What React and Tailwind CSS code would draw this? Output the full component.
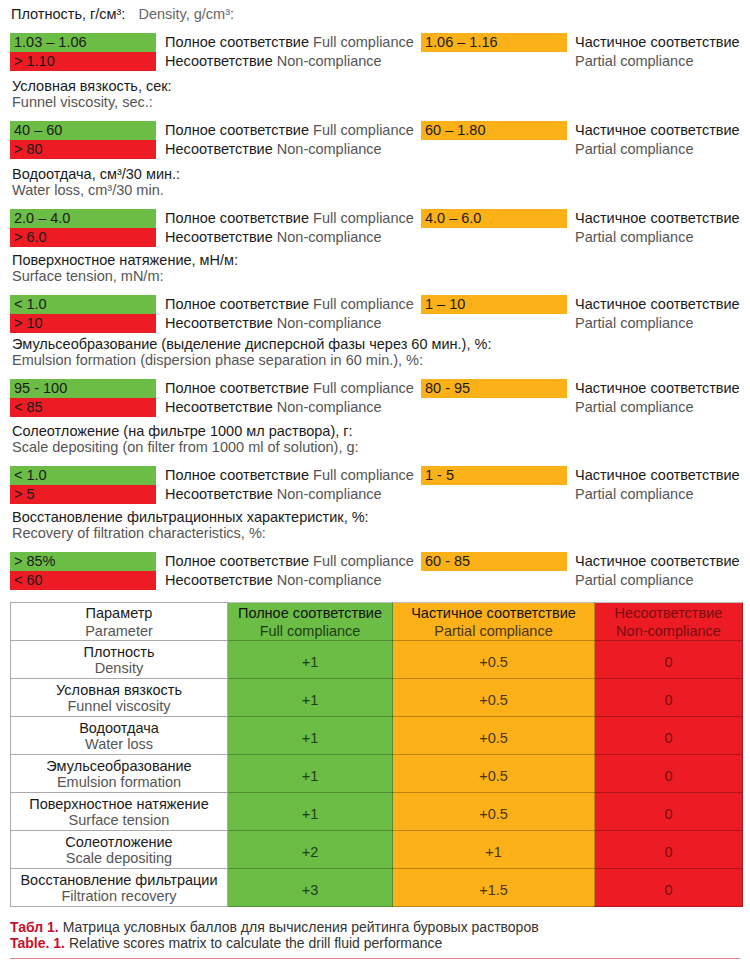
import React from 'react'

const sections = [
  { ru: 'Плотность, г/см³:', en: 'Density, g/cm³:', inline: true, pt: 6, full: '1.03 – 1.06', non: '> 1.10', partial: '1.06 – 1.16' },
  { ru: 'Условная вязкость, сек:', en: 'Funnel viscosity, sec.:', pt: 7, full: '40 – 60', non: '> 80', partial: '60 – 1.80' },
  { ru: 'Водоотдача, см³/30 мин.:', en: 'Water loss, cm³/30 min.', pt: 7, full: '2.0 – 4.0', non: '> 6.0', partial: '4.0 – 6.0' },
  { ru: 'Поверхностное натяжение, мН/м:', en: 'Surface tension, mN/m:', pt: 5, full: '< 1.0', non: '> 10', partial: '1 – 10' },
  { ru: 'Эмульсеобразование (выделение дисперсной фазы через 60 мин.), %:', en: 'Emulsion formation (dispersion phase separation in 60 min.), %:', pt: 3, full: '95 - 100', non: '< 85', partial: '80 - 95' },
  { ru: 'Солеотложение (на фильтре 1000 мл раствора), г:', en: 'Scale depositing (on filter from 1000 ml of solution), g:', pt: 6, full: '< 1.0', non: '> 5', partial: '1 - 5' },
  { ru: 'Восстановление фильтрационных характеристик, %:', en: 'Recovery of filtration characteristics, %:', pt: 5, full: '> 85%', non: '< 60', partial: '60 - 85' },
]

const rows = [
  ['Плотность', 'Density', '+1', '+0.5', '0'],
  ['Условная вязкость', 'Funnel viscosity', '+1', '+0.5', '0'],
  ['Водоотдача', 'Water loss', '+1', '+0.5', '0'],
  ['Эмульсеобразование', 'Emulsion formation', '+1', '+0.5', '0'],
  ['Поверхностное натяжение', 'Surface tension', '+1', '+0.5', '0'],
  ['Солеотложение', 'Scale depositing', '+2', '+1', '0'],
  ['Восстановление фильтрации', 'Filtration recovery', '+3', '+1.5', '0'],
]

// per-section top padding, written out so tailwind picks them up
const padTop = { 3: 'pt-[3px]', 4: 'pt-[4px]', 5: 'pt-[5px]', 6: 'pt-[6px]', 7: 'pt-[7px]' }

const Section = ({ s }) => (
  <div className={padTop[s.pt]}>
    {s.inline ? (
      <div className="h-4 leading-4 mb-[11px] px-[1px]">
        <span className="text-[#1a1a1a]">{s.ru}</span>
        <span className="text-[#666] ml-[13px]">{s.en}</span>
      </div>
    ) : (
      <div className="mb-[11px] leading-4 px-[2px]">
        <div className="text-[#1a1a1a]">{s.ru}</div>
        <div className="text-[#555]">{s.en}</div>
      </div>
    )}
    <div className="grid grid-cols-[146px_265px_146px_1fr] leading-[19px]">
      <div className="h-[19px] bg-[#6bbd46] pl-[4px] text-[#1a1a1a]">{s.full}</div>
      <div className="pl-[9px] whitespace-nowrap">
        <span className="text-[#1a1a1a]">Полное соответствие</span> <span className="text-[#555]">Full compliance</span>
      </div>
      <div className="h-[19px] bg-[#fbb117] pl-[4px] text-[#1a1a1a]">{s.partial}</div>
      <div className="pl-[8px] text-[#1a1a1a] whitespace-nowrap">Частичное соответствие</div>
      <div className="h-[19px] bg-[#ed1c24] pl-[4px] text-[#1a1a1a]">{s.non}</div>
      <div className="pl-[9px] whitespace-nowrap">
        <span className="text-[#1a1a1a]">Несоответствие</span> <span className="text-[#555]">Non-compliance</span>
      </div>
      <div />
      <div className="pl-[8px] text-[#555] whitespace-nowrap">Partial compliance</div>
    </div>
  </div>
)

export default function App() {
  return (
    <div className="w-[750px] h-[968px] bg-white px-[10px] text-[14.5px] font-['Liberation_Sans',Arial,sans-serif] overflow-hidden">
      {sections.map((s, i) => (
        <Section key={i} s={s} />
      ))}

      <table className="mt-[12px] w-[732px] border-collapse table-fixed text-center leading-4">
        <colgroup>
          <col className="w-[217px]" />
          <col className="w-[165px]" />
          <col className="w-[202px]" />
          <col className="w-[148px]" />
        </colgroup>
        <thead>
          <tr className="h-[38px]">
            <th className="font-normal border border-[#aaa] bg-white leading-[18px]">
              <div className="text-[#1a1a1a]">Параметр</div>
              <div className="text-[#555]">Parameter</div>
            </th>
            <th className="font-normal border border-black/25 bg-[#6bbd46] leading-[18px]">
              <div className="text-[#111]">Полное соответствие</div>
              <div className="text-[#1f3d12]">Full compliance</div>
            </th>
            <th className="font-normal border border-black/25 bg-[#fbb117] leading-[18px]">
              <div className="text-[#111]">Частичное соответствие</div>
              <div className="text-[#4a3510]">Partial compliance</div>
            </th>
            <th className="font-normal border border-black/25 bg-[#ed1c24] leading-[18px]">
              <div className="text-[#7a0c10]">Несоответствие</div>
              <div className="text-[#7a0c10]">Non-compliance</div>
            </th>
          </tr>
        </thead>
        <tbody>
          {rows.map((r, i) => (
            <tr key={i} className="h-[38px]">
              <td className="border border-[#aaa] bg-white">
                <div className="text-[#1a1a1a]">{r[0]}</div>
                <div className="text-[#555]">{r[1]}</div>
              </td>
              <td className="border border-black/25 bg-[#6bbd46] text-[#1f3d12] pt-[4px]">{r[2]}</td>
              <td className="border border-black/25 bg-[#fbb117] text-[#4a3510] pt-[4px]">{r[3]}</td>
              <td className="border border-black/25 bg-[#ed1c24] text-[#7a0c10] pt-[4px]">{r[4]}</td>
            </tr>
          ))}
        </tbody>
      </table>

      <div className="mt-[12px] text-[14px] leading-4">
        <div>
          <span className="text-[#c8102e] font-bold">Табл 1.</span>{' '}
          <span className="text-[#333]">Матрица условных баллов для вычисления рейтинга буровых растворов</span>
        </div>
        <div>
          <span className="text-[#c8102e] font-bold">Table. 1.</span>{' '}
          <span className="text-[#333]">Relative scores matrix to calculate the drill fluid performance</span>
        </div>
      </div>
      <div className="mt-[7px] h-px bg-[#e08585]" />
    </div>
  )
}
